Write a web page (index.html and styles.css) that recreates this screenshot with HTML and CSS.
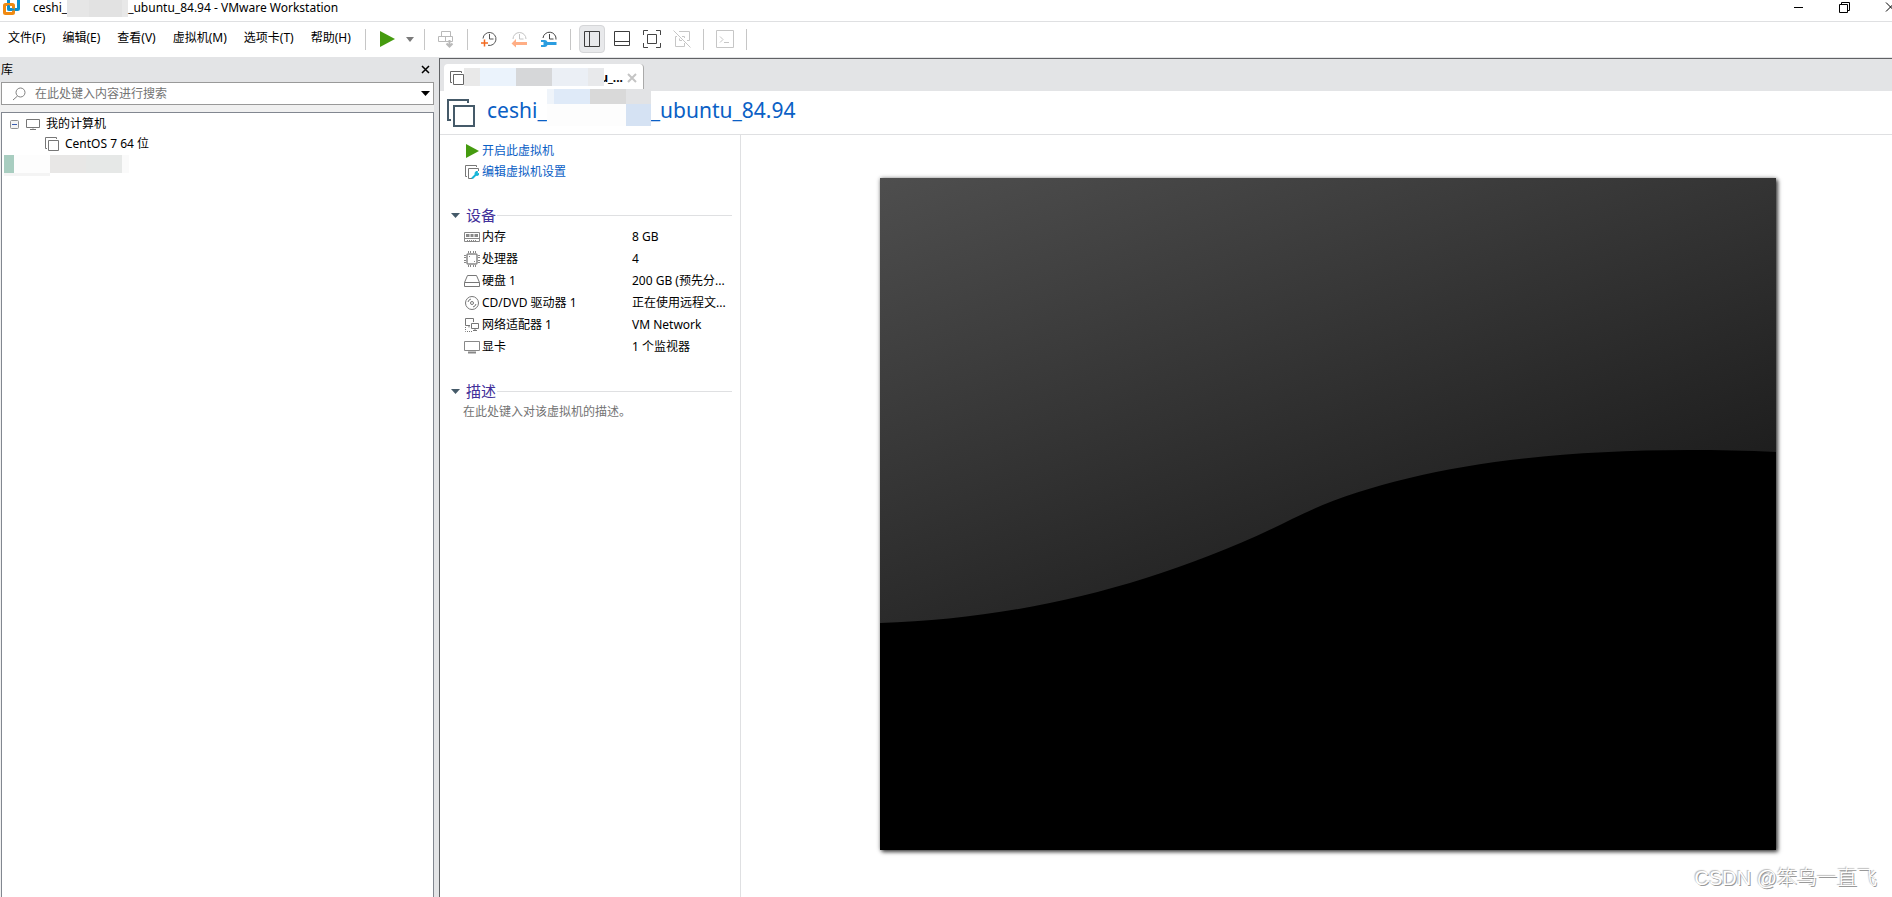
FILE: index.html
```
<!DOCTYPE html>
<html lang="zh-CN">
<head>
<meta charset="utf-8">
<title>ceshi_ubuntu_84.94 - VMware Workstation</title>
<link rel="stylesheet" href="styles.css">
</head>
<body>
<div class="window">
  <header class="titlebar">
    <svg class="app-logo" width="17" height="17" viewBox="0 0 17 17" fill="none" stroke-width="3"><rect x="5.500" y="-1.500" width="10" height="11" rx="1" stroke="#0a8fd0"/><rect x="1.500" y="4.500" width="9" height="9" rx="1" stroke="#f08a12"/><path d="M5.500 5v4.500h6" stroke="#0a8fd0" stroke-width="2"/></svg>
    <h1 class="app-title"><span>ceshi_</span><span class="mask mask-app"></span><span>_ubuntu_84.94 - VMware Workstation</span></h1>
    <div class="window-controls">
      <button type="button" aria-label="最小化"><svg width="12" height="12" viewBox="0 0 12 12"><path d="M1 6.500h9" stroke="#000" fill="none"/></svg></button>
      <button type="button" aria-label="还原"><svg width="12" height="12" viewBox="0 0 12 12" fill="none" stroke="#000"><path d="M.5 3.500h8v8h-8zM2.500 3.500v-2h8v8h-2"/></svg></button>
      <button type="button" aria-label="关闭"><svg width="12" height="12" viewBox="0 0 12 12" fill="none" stroke="#000"><path d="M1 1.500l9 9M10 1.500l-9 9"/></svg></button>
    </div>
  </header>

  <div class="menubar">
    <nav class="menus">
      <button type="button">文件(F)</button>
      <button type="button">编辑(E)</button>
      <button type="button">查看(V)</button>
      <button type="button">虚拟机(M)</button>
      <button type="button">选项卡(T)</button>
      <button type="button">帮助(H)</button>
    </nav>
    <div class="toolbar">
      <span class="sep"></span>
      <button type="button" class="tool" aria-label="开启"><svg width="16" height="16" viewBox="0 0 16 16"><path d="M1 0l15 8-15 8z" fill="#459b0f"/></svg></button>
      <button type="button" class="tool tool-caret" aria-label="电源选项"><svg width="8" height="5" viewBox="0 0 8 5"><path d="M0 0h8l-4 5z" fill="#7a7a7a"/></svg></button>
      <span class="sep"></span>
      <button type="button" class="tool" aria-label="发送 Ctrl+Alt+Del" disabled><svg width="18" height="18" viewBox="0 0 18 18" fill="none" stroke="#b9b9b9"><path d="M4.500 1.500h9v5h-9zM1.500 6.500h7v5h-7zM8.500 6.500h7v5h-7z"/><path d="M12.500 10v6M9.500 13.500l3 3 3-3" stroke-width="2"/></svg></button>
      <span class="sep"></span>
      <button type="button" class="tool" aria-label="拍摄快照"><svg width="18" height="18" viewBox="0 0 18 18" fill="none"><path d="M3 8.500a6.500 6.500 0 1 1 5 6.800" stroke="#555"/><path d="M9.500 4v5h4" stroke="#555"/><path d="M4.500 9.500v7M1 13h7" stroke="#f26a21" stroke-width="1.500"/></svg></button>
      <button type="button" class="tool" aria-label="恢复快照" disabled><svg width="18" height="18" viewBox="0 0 18 18" fill="none"><path d="M3 9a6.500 6.500 0 1 1 13 0" stroke="#c4c4c4"/><path d="M9.500 4v5h4" stroke="#c4c4c4"/><path d="M6 9v3h11v3H6v2.500L1.500 13.500z" fill="#ffae85"/></svg></button>
      <button type="button" class="tool" aria-label="管理快照"><svg width="18" height="18" viewBox="0 0 18 18" fill="none"><path d="M3 8a6.500 6.500 0 1 1 13 1.500" stroke="#444"/><path d="M9.500 4v5h4" stroke="#444"/><path d="M1 10h3.500a3 3 0 0 1 3 2H16.500v3H7.500a3 3 0 0 1-3 2H1v-2h2.500v-3H1z" fill="#2b9de0"/></svg></button>
      <span class="sep"></span>
      <button type="button" class="tool" aria-label="显示库" aria-pressed="true"><svg width="18" height="18" viewBox="0 0 18 18" fill="none" stroke="#3c3c3c"><path d="M1.500 1.500h15v15h-15zM6.500 1.500v15"/></svg></button>
      <button type="button" class="tool" aria-label="显示缩略图栏"><svg width="18" height="18" viewBox="0 0 18 18" fill="none" stroke="#3c3c3c"><path d="M1.500 1.500h15v14h-15zM1.500 11.500h15"/></svg></button>
      <button type="button" class="tool" aria-label="全屏"><svg width="18" height="18" viewBox="0 0 18 18" fill="none" stroke="#444"><path d="M.5 5V.5H5M13 .5h4.500V5M17.500 13v4.500H13M5 17.500H.5V13M4.500 4.500h9v9h-9z"/></svg></button>
      <button type="button" class="tool" aria-label="Unity" disabled><svg width="18" height="18" viewBox="0 0 18 18" fill="none" stroke="#c6c6c6"><path d="M6 1.500h10.500v9H14M11.500 8V6.500H9M11.500 13v3.500h-9v-10H4M6.500 8.500v2H9M.5 .5l17 17"/></svg></button>
      <span class="sep"></span>
      <button type="button" class="tool" aria-label="控制台" disabled><svg width="18" height="18" viewBox="0 0 18 18" fill="none" stroke="#c6c6c6"><path d="M.5 .5h17v17H.5zM4 6.500l3 3-3 3M8 12.500h5"/></svg></button>
      <span class="sep"></span>
    </div>
  </div>

  <div class="workspace">
    <aside class="library">
      <div class="library-head">
        <h2>库</h2>
        <button type="button" aria-label="关闭库"><svg width="9" height="9" viewBox="0 0 9 9"><path d="M1 1l7 7M8 1l-7 7" stroke="#000" stroke-width="1.500" fill="none"/></svg></button>
      </div>
      <div class="search">
        <svg width="14" height="14" viewBox="0 0 14 14" fill="none" stroke="#808080"><circle cx="8.500" cy="5.500" r="4.500"/><path d="M5.500 9L1 13"/></svg>
        <input type="search" aria-label="搜索" placeholder="在此处键入内容进行搜索">
        <button type="button" aria-label="搜索选项"><svg width="9" height="5" viewBox="0 0 9 5"><path d="M0 0h9L4.500 5z"/></svg></button>
      </div>
      <ul class="tree">
        <li>
          <div class="tree-row">
            <button type="button" class="toggle" aria-label="折叠"><svg width="9" height="9" viewBox="0 0 9 9" fill="none"><rect x=".5" y=".5" width="8" height="8" rx="1" fill="#f4f4f4" stroke="#919191"/><path d="M2 4.500h5" stroke="#3a5cb0"/></svg></button>
            <svg width="14" height="12" viewBox="0 0 14 12" fill="none" stroke="#777"><path d="M.5 1.500h13v8H.5zM7 9.500v1M4 11.500h6"/></svg>
            <span>我的计算机</span>
          </div>
          <ul>
            <li class="tree-row tree-child">
              <svg width="14" height="14" viewBox="0 0 14 14" fill="none" stroke="#777"><path d="M3.500 3.500h10v10h-10zM11.500 2V.5H.5v11H2"/></svg>
              <span>CentOS 7 64 位</span>
            </li>
          </ul>
        </li>
        <li class="mask mask-tree"></li>
      </ul>
    </aside>

    <main class="main">
      <div class="tabs">
        <div class="tab">
          <svg width="14" height="14" viewBox="0 0 14 14" fill="none" stroke="#666"><path d="M3.500 3.500h10v10h-10zM11.500 2V.5H.5v11H2"/></svg>
          <span class="mask mask-tab"></span>
          <span class="tab-text">u_...</span>
          <button type="button" aria-label="关闭标签页"><svg width="10" height="10" viewBox="0 0 10 10"><path d="M1 1l8 8M9 1l-8 8" stroke="#c4c4c4" stroke-width="2" fill="none"/></svg></button>
        </div>
      </div>
      <div class="vm-head">
        <svg width="28" height="28" viewBox="0 0 28 28" fill="none" stroke="#455a69" stroke-width="2"><path d="M7 7h20v20H7zM21 4V1H1v20h3"/></svg>
        <h2><span>ceshi_</span><span class="mask-slot"><span class="mask mask-vm"></span></span><span>_ubuntu_84.94</span></h2>
      </div>
      <div class="vm-body">
        <section class="details">
          <ul class="actions">
            <li><a href="#power"><svg width="14" height="14" viewBox="0 0 14 14"><path d="M1 0l13 7-13 7z" fill="#459b0f"/></svg>开启此虚拟机</a></li>
            <li><a href="#settings"><svg width="14" height="14" viewBox="0 0 14 14" fill="none" stroke="#777"><path d="M7 13.500H3.500v-10h10V6M11.500 2V.5H.5v11H2"/><path d="M7 13.500l4-4" stroke="#16b5d8" stroke-width="2"/><path d="M12.500 6.500a2 2 0 1 0 1.500 2l-2 .5z" fill="#16b5d8" stroke="#16b5d8"/></svg>编辑虚拟机设置</a></li>
          </ul>
          <h3 class="group"><button type="button"><svg width="9" height="5" viewBox="0 0 9 5"><path d="M0 0h9L4.500 5z" fill="#455a69"/></svg>设备</button></h3>
          <table class="devices">
            <tr><th scope="row"><span><svg width="16" height="14" viewBox="0 0 16 14" fill="none" stroke="#888"><path d="M.5 2.500h15v9H.5zM1 8.500h14"/><path d="M2 5.500h3.500M6.500 5.500h3M10.500 5.500H14" stroke-width="3"/><path d="M3 10.500h10" stroke-dasharray="1 1"/></svg>内存</span></th><td>8 GB</td></tr>
            <tr><th scope="row"><span><svg width="16" height="16" viewBox="0 0 16 16" fill="none" stroke="#888"><rect x="3" y="3" width="10" height="10" rx="1" stroke-width="1.500"/><path d="M4.500 0v2M6.500 0v2M9.500 0v2M11.500 0v2M4.500 14v2M6.500 14v2M9.500 14v2M11.500 14v2M0 4.500h2M0 6.500h2M0 9.500h2M0 11.500h2M14 4.500h2M14 6.500h2M14 9.500h2M14 11.500h2M5 5.500h1M10 10.500h1"/></svg>处理器</span></th><td>4</td></tr>
            <tr><th scope="row"><span><svg width="16" height="14" viewBox="0 0 16 14" fill="none" stroke="#777"><path d="M3.500 1.500h9l3 7v4H.5v-4zM.5 8.500h15"/></svg>硬盘 1</span></th><td>200 GB (预先分...</td></tr>
            <tr><th scope="row"><span><svg width="16" height="16" viewBox="0 0 16 16" fill="none" stroke="#777"><circle cx="8" cy="8" r="6.500"/><circle cx="8" cy="8" r="1.500"/><path d="M4 7a4 4 0 0 1 3-3M12 9a4 4 0 0 1-3 3"/></svg>CD/DVD 驱动器 1</span></th><td>正在使用远程文...</td></tr>
            <tr><th scope="row"><span><svg width="16" height="14" viewBox="0 0 16 14" fill="none" stroke="#777"><path d="M6 7.500H1.500v-7h8V4M7.500 5.500h7v5h-7zM11 10.500v2M9 12.500h4M5 7.500v2"/><path d="M1.500 9v4.500H9" stroke-dasharray="1 1"/></svg>网络适配器 1</span></th><td>VM Network</td></tr>
            <tr><th scope="row"><span><svg width="16" height="14" viewBox="0 0 16 14" fill="none" stroke="#888"><path d="M.5 1.500h15v9H.5z"/><path d="M4 12.500h8" stroke-width="2"/></svg>显卡</span></th><td>1 个监视器</td></tr>
          </table>
          <h3 class="group"><button type="button"><svg width="9" height="5" viewBox="0 0 9 5"><path d="M0 0h9L4.500 5z" fill="#455a69"/></svg>描述</button></h3>
          <textarea class="note" aria-label="描述" rows="2" placeholder="在此处键入对该虚拟机的描述。"></textarea>
        </section>
        <section class="stage">
          <svg class="screen" viewBox="0 0 896 672" role="img" aria-label="虚拟机屏幕">
            <defs><linearGradient id="shade" gradientUnits="userSpaceOnUse" x1="0" y1="0" x2="204" y2="564"><stop offset="0" stop-color="#4e4e4e"/><stop offset="1" stop-color="#1b1b1b"/></linearGradient></defs>
            <rect width="896" height="672" fill="url(#shade)"/>
            <path d="M0 445C140 441 282 406 412 341C520 287 690 265 896 274V672H0z"/>
          </svg>
        </section>
      </div>
    </main>
  </div>
  <p class="watermark">CSDN @笨鸟一直飞</p>
</div>
</body>
</html>
```
FILE: styles.css
```
* { box-sizing: border-box; }
body, h1, h2, h3, p, ul { margin: 0; padding: 0; font-weight: normal; }
ul { list-style: none; }
body, button, input, textarea {
  font-family: "Noto Sans", "Noto Sans CJK SC", sans-serif;
  font-size: 12px;
  line-height: 20px;
  color: #000;
}
button { padding: 0; border: 0; background: none; white-space: nowrap; }
svg { display: block; flex: none; }

.window { position: relative; display: flex; flex-direction: column; height: 100vh; overflow: hidden; background: #fff; }

.titlebar { display: flex; height: 22px; border-bottom: 1px solid #dfe0e2; overflow: hidden; }
.app-logo { margin: 0 13px 0 3px; }
.app-title { display: flex; flex: 1; font-size: 12px; line-height: 16px; }
.window-controls { display: flex; gap: 34px; margin-right: -5px; }
.window-controls button { width: 12px; height: 14px; }

.mask { display: block; flex: none; }
.mask-app { width: 61px; height: 17px; background: linear-gradient(90deg, #e6e6e6 22px, #e2e2e2 22px 55px, #e8e8e8 55px); }

.menubar { display: flex; height: 35px; }
.menus { display: flex; gap: 17px; padding: 0 8px 3px 8px; }
.toolbar { display: flex; align-items: center; padding-bottom: 1px; }
.sep { width: 1px; height: 21px; margin: 0 6px; background: #c6c6c6; }
.tool { display: flex; align-items: center; justify-content: center; width: 30px; height: 28px; }
.tool-caret { width: 16px; }
.tool[aria-pressed="true"] { width: 26px; margin: 0 2px; border: 1px solid #d5d6d8; border-radius: 4px; background: #e8e9eb; }

.workspace { display: flex; flex: 1; min-height: 0; background: #e3e4e6; }
.library { display: flex; flex-direction: column; width: 434px; margin-right: 5px; padding-left: 1px; background: #f0f0f0; }
.library-head { display: flex; align-items: center; justify-content: space-between; height: 25px; margin-left: -1px; padding: 0 4px 0 1px; background: #e3e4e6; }
.library-head h2 { font-size: 12px; }
.library-head button { width: 9px; height: 9px; }
.search { display: flex; align-items: center; height: 23px; margin-bottom: 7px; padding: 0 3px 0 10px; border: 1px solid #999; background: #fff; }
.search input { flex: 1; min-width: 0; margin-left: 9px; padding: 0; border: 0; outline: 0; background: none; }
.search input::placeholder, .note::placeholder { color: #737373; opacity: 1; }
.tree { flex: 1; padding-top: 1px; border: 1px solid #828790; border-bottom: 0; background: #fff; }
.tree-row { display: flex; align-items: center; height: 20px; padding-left: 8px; }
.tree-row span { margin-left: 6px; }
.toggle { width: 9px; height: 9px; margin-right: 7px; }
.tree-child { padding-left: 43px; }
.mask-tree {
  width: 125px; height: 21px; margin: 1px 0 0 2px;
  background:
    linear-gradient(#f4f4f4, #f4f4f4) 0 18px / 46px 3px no-repeat,
    linear-gradient(90deg, #a8cdc0 10px, #fdfdfd 10px 46px, #e8e7e6 46px 82px, #e6e8e7 82px 118px, #fafafa 118px) 0 0 / 125px 18px no-repeat;
}

.main { display: flex; flex: 1; flex-direction: column; min-width: 0; margin-top: 1px; border: solid #606265; border-width: 1px 0 0 1px; background: #fff; }
.tabs { display: flex; align-items: flex-end; height: 32px; padding-left: 4px; background: #e3e4e6; }
.tab { display: flex; align-items: center; width: 200px; height: 27px; padding: 0 6px; border-right: 1px solid #aaa; border-radius: 4px 4px 0 0; background: #fff; }
.mask-tab { z-index: 1; width: 140px; height: 18px; margin-bottom: 1px; background: linear-gradient(90deg, #e9e9e9 16px, #ebf3fc 16px 52px, #d6d7d9 52px 88px, #ebeff5 88px 124px, #e8e9eb 124px); }
.tab-text { display: flex; flex: 1; justify-content: flex-end; min-width: 0; margin-right: 4px; font-weight: bold; }
.tab button { width: 10px; height: 10px; }

.vm-head { display: flex; align-items: center; height: 44px; padding: 0 7px; border-bottom: 1px solid #dfe0e2; }
.vm-head h2 { display: flex; margin-left: 12px; padding-bottom: 6px; font-size: 21px; line-height: 30px; color: #0a60c5; }
.mask-slot { position: relative; width: 104px; }
.mask-vm {
  position: absolute; left: 0; top: -6px; width: 104px; height: 37px;
  background:
    linear-gradient(90deg, #eff4fa 7px, #dfeaf8 7px 43px, #d9d9d9 43px 79px, #e2e3e5 79px) 0 0 / 104px 15px no-repeat,
    linear-gradient(90deg, #fdfdfd 79px, #d5e2f3 79px) 0 15px / 104px 22px no-repeat;
}

.vm-body { display: flex; flex: 1; min-height: 0; }
.details { width: 301px; padding: 6px 8px 0 11px; border-right: 1px solid #dfe0e2; }
.actions { padding-left: 14px; }
.actions li { height: 21px; }
.actions a { display: inline-flex; align-items: center; gap: 3px; color: #0a60c5; text-decoration: none; }
.group { display: flex; align-items: center; height: 22px; margin-top: 21px; }
.group::after { content: ""; flex: 1; height: 1px; margin-left: 1px; background: #dfe0e2; }
.group button { display: flex; align-items: center; gap: 6px; font-size: 15px; color: #42309a; }
.devices { width: 100%; padding-left: 13px; margin-bottom: 22px; border-spacing: 0; table-layout: fixed; }
.devices tr { height: 22px; }
.devices th, .devices td { padding: 0; font-weight: normal; text-align: left; white-space: nowrap; }
.devices th { width: 168px; }
.devices th span { display: flex; align-items: center; gap: 2px; }
.note { display: block; width: 100%; padding: 0 0 0 12px; border: 0; outline: 0; resize: none; background: none; }

.stage { flex: 1; min-width: 0; padding: 43px 116px 47px 139px; }
.screen { width: 100%; height: auto; box-shadow: 2px 2px 4px rgba(0, 0, 0, .7), 0 0 4px rgba(0, 0, 0, .35); }

.watermark { position: absolute; right: 15px; bottom: 5px; font-family: "Liberation Sans", "Noto Sans CJK SC", sans-serif; font-size: 20px; font-weight: 300; line-height: 28px; color: #fff; text-shadow: 1px 1px 0 #999, -1px -1px 1px #bbb; }
```
